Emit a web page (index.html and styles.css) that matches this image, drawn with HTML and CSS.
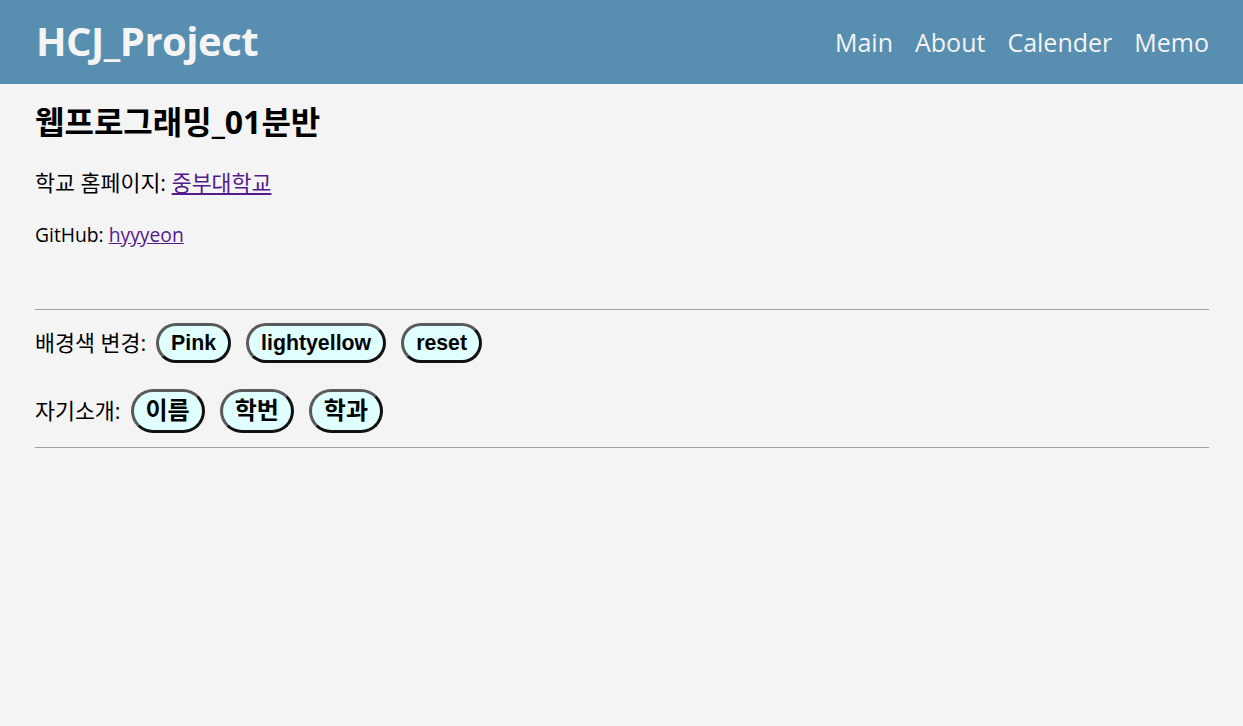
FILE: index.html
```html
<!DOCTYPE html>
<html lang="ko">
<head>
<meta charset="utf-8">
<title>HCJ_Project</title>
<link rel="stylesheet" href="styles.css">
</head>
<body>
<header class="topbar">
  <div class="brand">HCJ_Project</div>
  <nav class="nav">
    <a href="#" class="nav-link">Main</a>
    <a href="#" class="nav-link">About</a>
    <a href="#" class="nav-link">Calender</a>
    <a href="#" class="nav-link">Memo</a>
  </nav>
</header>
<main class="content">
  <h1 class="title">웹프로그래밍_01분반</h1>
  <p class="info">학교 홈페이지: <a href="#" class="link">중부대학교</a></p>
  <p class="info info-latin">GitHub: <a href="#" class="link">hyyyeon</a></p>
  <hr class="rule rule-top">
  <div class="row row-first">
    <span class="label">배경색 변경:</span>
    <button class="pill">Pink</button>
    <button class="pill">lightyellow</button>
    <button class="pill">reset</button>
  </div>
  <div class="row row-second">
    <span class="label">자기소개:</span>
    <button class="pill pill-ko">이름</button>
    <button class="pill pill-ko">학번</button>
    <button class="pill pill-ko">학과</button>
  </div>
  <hr class="rule rule-bottom">
</main>
</body>
</html>
```

FILE: styles.css
```css
html, body {
  margin: 0;
  padding: 0;
}
body {
  background: #f4f4f4;
  font-family: "Open Sans", "Noto Sans CJK KR", sans-serif;
  color: #000;
}
.topbar {
  height: 84px;
  background: #588eb0;
  display: flex;
  align-items: center;
  justify-content: space-between;
  padding: 0 34px 0 36px;
  box-sizing: border-box;
  color: #f4f4f4;
}
.brand {
  font-size: 40px;
  font-weight: 700;
  letter-spacing: -0.5px;
  line-height: 50px;
  margin-top: -2px;
}
.nav {
  display: flex;
  gap: 22px;
}
.nav-link {
  color: #f4f4f4;
  text-decoration: none;
  font-size: 25px;
  line-height: 32px;
}
.content {
  padding: 0 34px 0 35px;
}
.title {
  font-size: 32px;
  font-weight: 700;
  line-height: 36px;
  margin: 20px 0 28px;
}
.info {
  font-size: 21.7px;
  line-height: 30px;
  margin: 22px 0;
}
.info-latin {
  font-size: 19.3px;
}
.link {
  color: #551a8b;
}
.rule {
  border: 0;
  border-top: 1px solid #a0a0a0;
  height: 0;
  margin: 0;
}
.rule-top {
  margin-top: 59px;
}
.row {
  display: flex;
  align-items: center;
}
.row-first {
  margin-top: 13px;
}
.row-second {
  margin-top: 26px;
}
.rule-bottom {
  margin-top: 14px;
}
.label {
  font-size: 21.7px;
  line-height: 30px;
  margin-right: 10px;
}
.pill {
  font-family: "Liberation Sans", "Noto Sans CJK KR", sans-serif;
  font-size: 21.3px;
  font-weight: 700;
  line-height: 24px;
  padding: 5px 12px;
  border: 3px solid;
  border-color: #5a5a5a #111 #111 #5a5a5a;
  border-radius: 20px;
  background: #e0ffff;
  color: #000;
  margin-right: 15px;
}
.pill-ko {
  font-size: 24px;
  padding: 7px 12px;
  border-radius: 22px;
}
```
